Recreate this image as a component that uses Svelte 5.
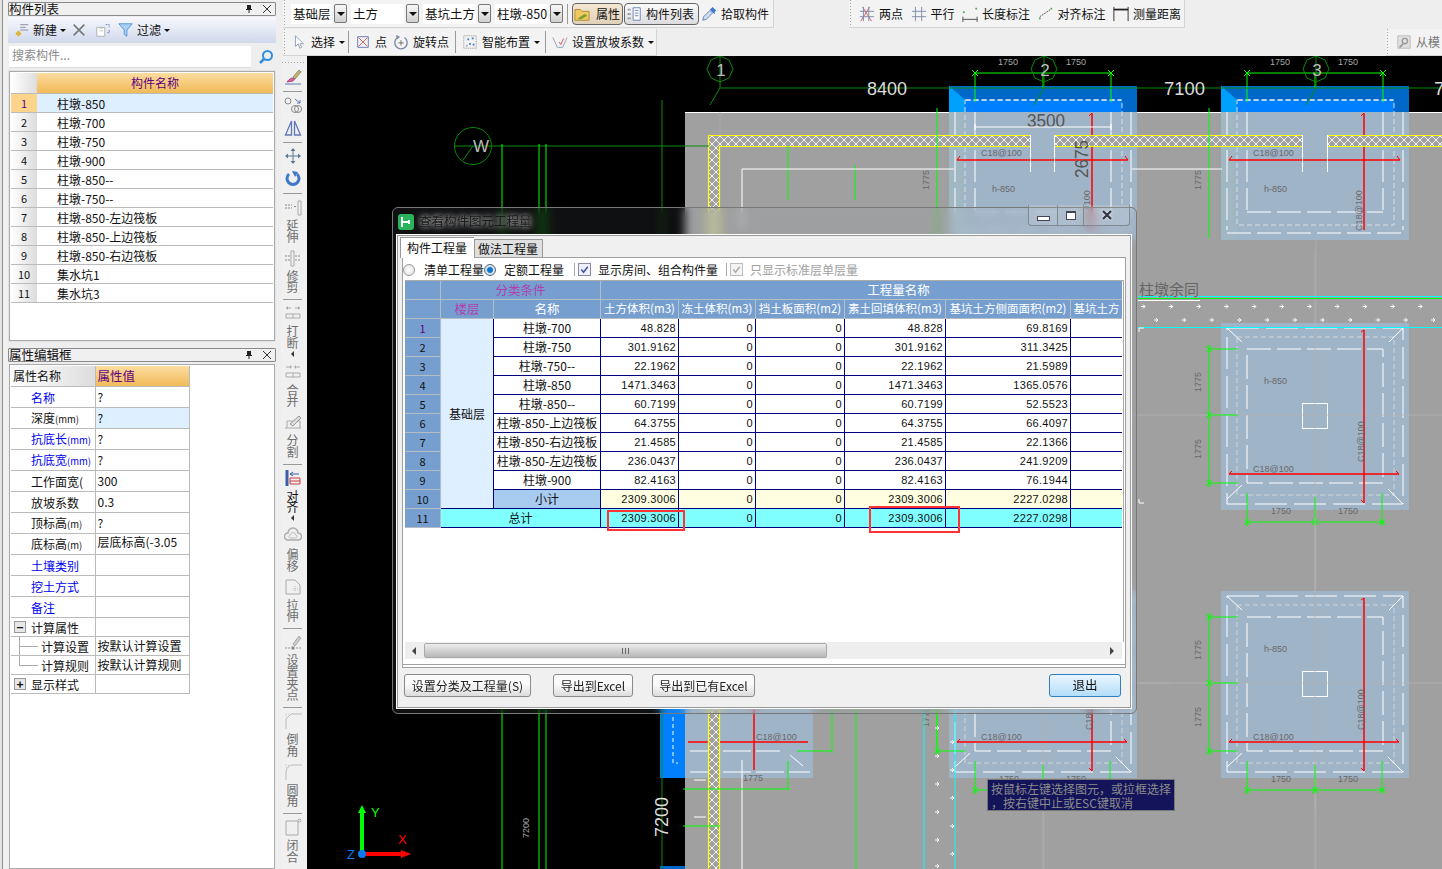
<script>
  const parts = ["柱墩-850","柱墩-700","柱墩-750","柱墩-900","柱墩-850--","柱墩-750--","柱墩-850-左边筏板","柱墩-850-上边筏板","柱墩-850-右边筏板","集水坑1","集水坑3"]

  const props = [
    { k: "名称", v: "?", blue: true },
    { k: "深度", u: "(mm)", v: "?", on: true },
    { k: "抗底长", u: "(mm)", v: "?", blue: true },
    { k: "抗底宽", u: "(mm)", v: "?", blue: true },
    { k: "工作面宽(", v: "300" },
    { k: "放坡系数", v: "0.3" },
    { k: "顶标高", u: "(m)", v: "?" },
    { k: "底标高", u: "(m)", v: "层底标高(-3.05", high: true },
    { k: "土壤类别", v: "", blue: true },
    { k: "挖土方式", v: "", blue: true },
    { k: "备注", v: "", blue: true },
  ]

  const rows = [
    ["柱墩-700","48.828","48.828","69.8169"],
    ["柱墩-750","301.9162","301.9162","311.3425"],
    ["柱墩-750--","22.1962","22.1962","21.5989"],
    ["柱墩-850","1471.3463","1471.3463","1365.0576"],
    ["柱墩-850--","60.7199","60.7199","52.5523"],
    ["柱墩-850-上边筏板","64.3755","64.3755","66.4097"],
    ["柱墩-850-右边筏板","21.4585","21.4585","22.1366"],
    ["柱墩-850-左边筏板","236.0437","236.0437","241.9209"],
    ["柱墩-900","82.4163","82.4163","76.1944"],
  ]
  const cols = [36,53,107,78,77,89,101,125,51]
  const heads = ["土方体积(m3)","冻土体积(m3)","挡土板面积(m2)","素土回填体积(m3)","基坑土方侧面面积(m2)","基坑土方"]

  const vtools = [
    { i: "brush", on: true },
    { sep: true },
    { i: "circles", on: true },
    { i: "mirror", on: true },
    { sep: true },
    { i: "move", on: true },
    { i: "rotate", on: true },
    { sep: true },
    { i: "extend", t: "延伸" },
    { i: "trim", t: "修剪" },
    { sep: true },
    { i: "break", t: "打断", more: true },
    { i: "merge", t: "合并" },
    { i: "split", t: "分割" },
    { sep: true },
    { i: "align", t: "对齐", more: true, on: true },
    { i: "offset", t: "偏移" },
    { i: "stretch", t: "拉伸" },
    { sep: true },
    { i: "grip", t: "设置夹点" },
    { sep: true },
    { i: "chamfer", t: "倒角" },
    { i: "fillet", t: "圆角" },
    { sep: true },
    { i: "close", t: "闭合" },
  ]

  const arrowsA = Array.from({ length: 11 }, (_, i) => 1141 + i * 27.7)
  const arrowsB = Array.from({ length: 11 }, (_, i) => 1154 + i * 27.7)
  const arrowsC = [728, 742, 756, 770, 784, 798, 812, 826, 840, 854, 866]
</script>

{#snippet vicon(name)}
  <svg class="vi" viewBox="0 0 18 18" fill="none" stroke="#8a8a8a">
    {#if name === "brush"}
      <path d="M15 2 9 9l2 2 6-7z" fill="#c9b36a" stroke="#8f8f6a"/><path d="M8 10c-3 1-4 3-5 4l6-1 1.5-2z" fill="#d9609a" stroke="#b04a80"/><path d="M1 16h16" stroke="#5f78b8"/>
    {:else if name === "circles"}
      <circle cx="4" cy="5" r="3"/><path d="m11 3 5 4m0-3v3h-3" stroke="#5f78b8"/><circle cx="11" cy="13" r="3.5"/><circle cx="14" cy="13" r="3.5"/>
    {:else if name === "mirror"}
      <path d="M7.5 2 1.5 16h6zM10.5 2l6 14h-6z" stroke="#5f78b8" stroke-width="1.3"/>
    {:else if name === "move"}
      <path d="M9 3v12M3 9h12" stroke="#5f7898"/><path d="M9 1 6.500 4h5zM9 17l-2.500-3h5zM1 9l3-2.500v5zM17 9l-3-2.500v5z" fill="#5f7898" stroke="none"/>
    {:else if name === "rotate"}
      <path d="M5 4a6 6 0 1 0 8 0" stroke="#3f78c8" stroke-width="3"/><path d="m8 1 6 1-3 5z" fill="#3f78c8" stroke="none"/>
    {:else if name === "extend"}
      <path d="M1 7h7M1 10h7M10 8.500h2" stroke-dasharray="2 1"/><path d="M14 3h3v14h-3z" stroke="#aaa"/>
    {:else if name === "trim"}
      <path d="M1 7h6M1 11h6M11 7h6M11 11h6" stroke-dasharray="2 1"/><path d="M7 2h3v15H7z" stroke="#aaa"/>
    {:else if name === "break"}
      <path d="M2 4h5M11 4h5" stroke="#aaa"/><path d="m2 4 2-2v4zM16 4l-2-2v4z" fill="#aaa" stroke="none"/><path d="M2 10h14v4H2zM9 10v4" stroke="#aaa"/>
    {:else if name === "merge"}
      <path d="M2 4h5M11 4h5" stroke="#aaa"/><path d="M8 4 6 2v4zM10 4l2-2v4z" fill="#aaa" stroke="none"/><path d="M2 10h14v4H2zM9 10v4" stroke="#aaa"/>
    {:else if name === "split"}
      <path d="M1 15h16M3 15V8h13v7" stroke="#aaa"/><path d="m6 11 9-8 2 2-8 8z" fill="#ddd" stroke="#999"/>
    {:else if name === "align"}
      <path d="M3 1v16" stroke="#3a5fa8" stroke-width="3"/><path d="M6 5h9M6 5l3-2M6 5l3 2" stroke="#3a5fa8"/><path d="M6 9h10v6H6z" stroke="#c84040"/><path d="M6 12h10" stroke="#c84040"/>
    {:else if name === "offset"}
      <path d="M4 13a3.500 3.500 0 0 1 0-7 5 5 0 0 1 10 0 3.500 3.500 0 0 1 0 7z" stroke-width="1.500" stroke="#aaa"/><path d="M6.500 11a1.500 1.500 0 0 1 0-3 2.500 2.500 0 0 1 5 0 1.500 1.500 0 0 1 0 3z" stroke="#bbb"/>
    {:else if name === "stretch"}
      <path d="M2 2h9l5 5v9H2z" stroke="#aaa"/><path d="M11 8v6M9 11h5" stroke="#bbb" stroke-dasharray="1 1"/>
    {:else if name === "grip"}
      <path d="m9 11 6-8 2 2-6 8z" fill="#ccc" stroke="#aaa"/><path d="M1 15h5M12 15h5" stroke="#999" stroke-dasharray="2 1"/><rect x="7.500" y="13.500" width="3" height="3" fill="#888" stroke="none"/>
    {:else if name === "chamfer"}
      <path d="M2 17V7l5-5h11" stroke="#bbb"/><path d="M2 2h4M2 2v4" stroke="#ccc" stroke-dasharray="1 1"/>
    {:else if name === "fillet"}
      <path d="M2 17V9a7 7 0 0 1 7-7h9" stroke="#bbb"/><path d="M2 2h4M2 2v4" stroke="#ccc" stroke-dasharray="1 1"/>
    {:else if name === "close"}
      <path d="M2 3h12v14H2z" stroke="#aaa"/><circle cx="15.500" cy="2.500" r="1.500" stroke="#aaa"/>
    {/if}
  </svg>
{/snippet}

{#snippet pad(dx, dy)}
  <g transform="translate({dx} {dy})">
    <rect x="1221" y="323" width="188" height="187" fill="#a0b4c8"/>
    <path d="M1227 328h176v176h-176z" fill="none" stroke="#fff" stroke-dasharray="32 7"/>
    <path d="M1237 337h157v158h-157z" fill="none" stroke="#d0d4d8" stroke-dasharray="5 3"/>
    <path d="M1247 349h136v134h-136z" fill="none" stroke="#fff" stroke-dasharray="24 6"/>
    <path d="M1227 328l15 14M1403 328l-14 14M1227 499l15-14M1403 504l-15-15" stroke="#fff"/>
    <rect x="1302.500" y="403.500" width="25" height="25" fill="none" stroke="#fff"/>
    <path d="M1315 250v560M1100 415h342" stroke="#b4b4b4" opacity=".7"/>
    <path d="M1229 474h170M1364 330v173" stroke="#f00" stroke-width="1.500"/>
    <path d="m1229 474 3-3M1399 474l-3-3M1364 330l-3 2M1364 503l-3-3" stroke="#f00"/>
    <text x="1253" y="472" class="cad">C18@100</text>
    <text x="1364" y="462" class="cad" transform="rotate(-90 1364 462)">C18@100</text>
    <text x="1264" y="384" class="cad">h-850</text>
    <path d="M1209 345v142M1209 349h29M1209 415h29M1209 483h29M1247 493v33M1315 497v29M1382 493v33M1246 522h139" stroke="#0f0"/>
    <path d="m1206 346 6 6m0-6-6 6M1206 412l6 6m0-6-6 6M1206 480l6 6m0-6-6 6M1244 519l6 6m0-6-6 6M1312 519l6 6m0-6-6 6M1379 519l6 6m0-6-6 6" stroke="#0f0"/>
    <text x="1201" y="392" class="cad" transform="rotate(-90 1201 392)">1775</text>
    <text x="1201" y="459" class="cad" transform="rotate(-90 1201 459)">1775</text>
    <text x="1271" y="514" class="cad">1750</text>
    <text x="1338" y="514" class="cad">1750</text>
  </g>
{/snippet}

{#snippet topPad(dx)}
  <g transform="translate({dx} 0)">
    <rect x="1221" y="86" width="188" height="26" fill="#0068c8"/>
    <path d="M1221 86 1237 100h157v12H1221z" fill="#0080ff"/>
    <path d="M1221 86 1237 100v12h-16z" fill="#00a0ff"/>
    <rect x="1221" y="112" width="188" height="128" fill="#a0b4c8"/>
    <rect x="1221" y="112" width="16" height="128" fill="#a0b8c4"/>
    <path d="M1237 100h157v125h-157z" fill="none" stroke="#d8dce0" stroke-dasharray="5 3"/>
    <path d="M1238 100h155" stroke="#fff" stroke-dasharray="5 3" stroke-width="1.200"/>
    <path d="M1227 112v118M1247 112v98M1383 112v98M1403 112v118" stroke="#fff" stroke-dasharray="32 6"/>
    <path d="M1247 212h136M1227 233h176" stroke="#fff" stroke-dasharray="24 6"/>
    <path d="M1229 160h171M1364 113v117" stroke="#f00" stroke-width="1.500"/>
    <path d="m1229 160 3-4M1400 160l-3-4M1364 113l-3 3" stroke="#f00"/>
    <path d="M1247 73h136M1247 73v29M1383 73v29M1315 73v15" stroke="#0f0"/>
    <path d="m1244 70 6 6m0-6-6 6M1380 70l6 6m0-6-6 6" stroke="#0f0"/>
    <text x="1270" y="65" class="cadw">1750</text>
    <text x="1338" y="65" class="cadw">1750</text>
    <text x="1253" y="156" class="cad">C18@100</text>
    <text x="1264" y="192" class="cad">h-850</text>
    <text x="1362" y="231" class="cad" transform="rotate(-90 1362 231)">C18@100</text>
  </g>
{/snippet}

<div class="app">
  <aside class="left">
    <div class="strip"></div>
    <div class="lcol">
      <div class="ptitle">
        <span>构件列表</span>
        <svg class="pin" viewBox="0 0 10 10"><path d="M3 1h4v4h1v1H5.500v3h-1V6H2V5h1z" fill="#222"/></svg>
        <svg class="x" viewBox="0 0 10 10"><path d="m1 1 8 8m0-8-8 8" stroke="#333"/></svg>
      </div>
      <div class="ltools">
        <svg class="ti" viewBox="0 0 18 18" fill="none"><path d="M7 3h9M7 6h6M7 9h9" stroke="#8a8a9a"/><path d="M5 10v6M2 13h6" stroke="#e0b030" stroke-width="2.500"/></svg>
        <span>新建</span><i class="drop"></i>
        <svg class="ti gap1" viewBox="0 0 18 18"><path d="m3 3 12 12m0-12L3 15" stroke="#777" stroke-width="1.800"/></svg>
        <svg class="ti gap2" viewBox="0 0 18 18" fill="none"><path d="M2 6h9v10H2z" fill="#fff" stroke="#aaa"/><path d="M5 7h4M5 10h4" stroke="#bbb"/><path d="M12 3h4v3m0 3v3h-3" stroke="#5f78b8" stroke-dasharray="2 1"/></svg>
        <svg class="ti gap3" viewBox="0 0 18 18"><path d="M1 2h15l-6 7v7l-3-2V9z" fill="#a8d0f4" stroke="#4a90d8"/></svg>
        <span>过滤</span><i class="drop"></i>
      </div>
      <div class="search">
        <div class="sinput">搜索构件...</div>
        <svg class="sbtn" viewBox="0 0 16 16" fill="none"><circle cx="9.500" cy="6.500" r="4.500" stroke="#2d8ee0" stroke-width="2"/><path d="M6 10 2 14" stroke="#2d8ee0" stroke-width="2.500"/></svg>
      </div>
      <div class="listbox">
        <table class="ltable">
          <colgroup><col class="c-idx"/><col/></colgroup>
          <thead><tr><th class="corner"></th><th class="orange">构件名称</th></tr></thead>
          <tbody>
            {#each parts as p, i}
              <tr class:sel={i === 0}>
                <td class="idx">{i + 1}</td>
                <td class="nm">{p}</td>
              </tr>
            {/each}
          </tbody>
        </table>
      </div>
      <div class="ptitle second">
        <span>属性编辑框</span>
        <svg class="pin" viewBox="0 0 10 10"><path d="M3 1h4v4h1v1H5.500v3h-1V6H2V5h1z" fill="#222"/></svg>
        <svg class="x" viewBox="0 0 10 10"><path d="m1 1 8 8m0-8-8 8" stroke="#333"/></svg>
      </div>
      <div class="propbox">
        <table class="ptable">
          <colgroup><col class="c-k"/><col class="c-v"/></colgroup>
          <thead><tr><th class="pk">属性名称</th><th class="orange pv">属性值</th></tr></thead>
          <tbody>
            {#each props as r}
              <tr>
                <td class="key" class:blue={r.blue}>{r.k}{#if r.u}<small>{r.u}</small>{/if}</td>
                <td class="val" class:on={r.on} class:high={r.high}>{r.v}</td>
              </tr>
            {/each}
            <tr class="low"><td class="key tree"><span class="box">−</span>计算属性</td><td class="val"></td></tr>
            <tr class="low"><td class="key sub"><i class="branch"></i>计算设置</td><td class="val">按默认计算设置</td></tr>
            <tr class="low"><td class="key sub"><i class="branch last"></i>计算规则</td><td class="val">按默认计算规则</td></tr>
            <tr class="low"><td class="key tree"><span class="box">+</span>显示样式</td><td class="val"></td></tr>
          </tbody>
        </table>
      </div>
    </div>
  </aside>

  <div class="main">
    <div class="top">
      <div class="toprow">
        <div class="bar tb1">
          <div class="combo w1"><span class="cv">基础层</span><b class="cb"></b></div>
          <div class="combo w2"><span class="cv">土方</span><b class="cb"></b></div>
          <div class="combo w3"><span class="cv">基坑土方</span><b class="cb"></b></div>
          <div class="combo w4"><span class="cv">柱墩-850</span><b class="cb"></b></div>
          <i class="vsep"></i>
          <div class="tog b1">
            <svg class="ti" viewBox="0 0 18 18"><path d="M1 4h6l2 2h8v10H1z" fill="#f0c860" stroke="#a88830"/><path d="m4 14 8-5 3 2-7 4z" fill="#78a030"/></svg>
            <span>属性</span>
          </div>
          <div class="tog b2">
            <svg class="ti" viewBox="0 0 18 18" fill="none"><path d="M8 2h8v14H8z" fill="#fff" stroke="#5f78b8"/><path d="M10 5h4M10 8h4M10 11h4" stroke="#5f78b8"/><path d="M2 4h3M2 9h3M2 14h3" stroke="#666" stroke-width="2" stroke-dasharray="1 1"/></svg>
            <span>构件列表</span>
          </div>
          <div class="plain pick">
            <svg class="ti" viewBox="0 0 18 18"><path d="m2 16 1-4 7-7 3 3-7 7z" fill="#cde" stroke="#5f78b8"/><path d="m11 3 2-2 4 4-2 2 1 1-1 1-5-5 1-1z" fill="#3f78c8"/></svg>
            <span>拾取构件</span>
          </div>
        </div>
        <div class="bar tb2">
          <div class="plain">
            <svg class="ti" viewBox="0 0 18 18" fill="none"><path d="M4 1 14 17M12 1 2 17" stroke="#d05050"/><path d="M5 1v16M11 1v16M1 6h16M1 12h16" stroke="#7a88a8"/></svg>
            <span>两点</span>
          </div>
          <div class="plain">
            <svg class="ti" viewBox="0 0 18 18" fill="none"><path d="M5 1v16M12 1v16M1 6h16M1 12h16" stroke="#7a88a8"/></svg>
            <span>平行</span>
          </div>
          <div class="plain">
            <svg class="ti" viewBox="0 0 18 18" fill="none"><path d="M1 15h16M1 12v6M17 12v6" stroke="#444"/><rect x="1" y="6" width="2" height="2" fill="#5a5"/><rect x="15" y="2" width="2" height="2" fill="#5a5"/></svg>
            <span>长度标注</span>
          </div>
          <div class="plain">
            <svg class="ti" viewBox="0 0 18 18" fill="none"><path d="m2 12 12-8" stroke="#444" stroke-dasharray="2 1"/><rect x="1" y="13" width="2" height="2" fill="#5a5"/><rect x="14" y="2" width="2" height="2" fill="#5a5"/></svg>
            <span>对齐标注</span>
          </div>
          <div class="plain">
            <svg class="ti" viewBox="0 0 18 18" fill="none"><path d="M1 1v16M17 1v16" stroke="#222"/><path d="M1 4h16" stroke="#222" stroke-width="2"/></svg>
            <span>测量距离</span>
          </div>
        </div>
      </div>
      <div class="toprow second">
        <div class="bar tb3">
          <div class="plain">
            <svg class="ti" viewBox="0 0 18 18"><path d="M5 2v12l3-3 2 5 2-1-2-4h4z" fill="#fff" stroke="#8a98b8"/></svg>
            <span>选择</span><i class="drop flush"></i>
          </div>
          <i class="vsep s1"></i>
          <div class="plain">
            <svg class="ti" viewBox="0 0 18 18" fill="none"><path d="M3 3h12v12H3z" stroke="#5f78b8"/><path d="m4 4 10 10m0-10L4 14" stroke="#d05050"/></svg>
            <span>点</span>
          </div>
          <div class="plain">
            <svg class="ti" viewBox="0 0 18 18" fill="none"><path d="M5 4a7 7 0 1 0 8 0" stroke="#7a88a8" stroke-width="1.500"/><path d="M9 7v6M6 10h6" stroke="#666"/><path d="m3 1 5 2-3 3z" fill="#7a88a8"/></svg>
            <span>旋转点</span>
          </div>
          <i class="vsep s2"></i>
          <div class="plain">
            <svg class="ti" viewBox="0 0 18 18" fill="none"><path d="M2 2h14v14H2z" stroke="#888" stroke-dasharray="1 1"/><path d="M6 6h2M11 5h2M8 11h2M12 12h2M5 13h1" stroke="#3f78c8" stroke-width="2"/></svg>
            <span>智能布置</span><i class="drop flush"></i>
          </div>
          <i class="vsep s3"></i>
          <div class="plain">
            <svg class="ti" viewBox="0 0 18 18" fill="none"><path d="m1 4 5 11h6l5-11" stroke="#8a98b8"/><path d="m8 9 2 3 3-7" stroke="#d05050"/></svg>
            <span>设置放坡系数</span><i class="drop flush"></i>
          </div>
        </div>
        <div class="bar tb4">
          <div class="plain">
            <svg class="ti" viewBox="0 0 18 18" fill="none"><path d="M2 2h14v14H2z" fill="#e0e0e0" stroke="#bbb"/><circle cx="10" cy="8" r="3" stroke="#999" stroke-width="1.500"/><path d="m8 11-4 4" stroke="#999" stroke-width="2"/></svg>
            <span class="grey">从模</span>
          </div>
        </div>
      </div>
    </div>

    <div class="body">
      <div class="vbar">
        <i class="vgrip"></i>
        {#each vtools as v}
          {#if v.sep}
            <i class="vline"></i>
          {:else}
            <div class="vbtn" class:solo={!v.t}>
              {@render vicon(v.i)}
              {#if v.t}
                <div class="vt" class:dark={v.on}>
                  {#each v.t as ch}<span>{ch}</span>{/each}
                </div>
              {/if}
              {#if v.more}<i class="left-arrow"></i>{/if}
            </div>
          {/if}
        {/each}
      </div>

      <div class="canvas">
        <svg class="draw" viewBox="307 56 1135 813" font-family="Liberation Sans, sans-serif">
          <defs>
            <pattern id="hatch" width="8" height="8" patternUnits="userSpaceOnUse">
              <path d="M0 0l8 8M8 0 0 8" stroke="#fff" stroke-width=".9"/>
            </pattern>
          </defs>
          <rect x="307" y="56" width="1135" height="813" fill="#000"/>
          <rect x="685" y="112" width="757" height="757" fill="#a0a0a0"/>
          <path d="M685 112.500h757" stroke="#fff"/>

          <path d="M1044 112v760M1316 112v760M720 112v34" stroke="#b4b4b4" opacity=".55"/>

          <!-- pile caps -->
          {@render topPad(-272)}
          {@render topPad(0)}
          {@render pad(0, 0)}
          {@render pad(0, 268)}
          {@render pad(-272, 268)}
          <rect x="660" y="700" width="25" height="78" fill="#0080ff"/>
          <rect x="660" y="866" width="25" height="3" fill="#0068c8"/>
          <rect x="685" y="591" width="128" height="187" fill="#a0b4c8"/>
          <path d="M673 717v46h5" fill="none" stroke="#fff" stroke-dasharray="4 3"/>
          <path d="M690 751h90M690 772h120" stroke="#fff" stroke-dasharray="28 5"/>
          <path d="M790 755l13 11M694 780h12M694 817h12" stroke="#fff"/>
          <path d="M688 742h120M754 700v70" stroke="#f00" stroke-width="1.500"/>
          <text x="756" y="740" class="cad">C18@100</text>
          <text x="743" y="781" class="cad">1775</text>

          <!-- wall band -->
          <rect x="709" y="135" width="733" height="11" fill="#a0a0a0"/>
          <rect x="709" y="135" width="733" height="11" fill="url(#hatch)"/>
          <rect x="709" y="135" width="10" height="734" fill="#a0a0a0"/>
          <rect x="709" y="135" width="10" height="734" fill="url(#hatch)"/>
          <path d="M708.500 869V135.500H1442M719.500 869V146.500H1442" fill="none" stroke="#ff0" stroke-width="1.200"/>
          <path d="M1030.500 135v37M1054.500 135v37M1302.500 135v37M1327.500 135v37" stroke="#fff"/>
          <rect x="1031" y="135" width="23" height="12" fill="#a0b4c8"/>
          <rect x="1303" y="135" width="24" height="12" fill="#a0b4c8"/>

          <!-- axes -->
          <path d="M455 146h254" stroke="#0a8a0a"/>
          <path d="M720 88h722" stroke="#0a8a0a" stroke-width="1.200"/>
          <path d="M720 88l-10 17M1044 88l-10 17M1316 88l-10 17M473 146l-10 14" stroke="#0a8a0a"/>
          <path d="M720 56v32M1044 56v32M1316 56v32" stroke="#0a8a0a"/>
          <polygon points="720,56 729,60 733,69 729,78 720,82 711,78 707,69 711,60" fill="none" stroke="#0a8a0a"/>
          <polygon points="1044,56 1053,60 1057,69 1053,78 1044,82 1035,78 1031,69 1035,60" fill="none" stroke="#0a8a0a"/>
          <polygon points="1316,56 1325,60 1329,69 1325,78 1316,82 1307,78 1303,69 1307,60" fill="none" stroke="#0a8a0a"/>
          <circle cx="473" cy="146" r="18.500" fill="none" stroke="#0a8a0a"/>
          <text x="721" y="76" class="axis" text-anchor="middle">1</text>
          <text x="1045" y="76" class="axis" text-anchor="middle">2</text>
          <text x="1317" y="76" class="axis" text-anchor="middle">3</text>
          <text x="481" y="152" class="axis" text-anchor="middle">W</text>
          <text x="867" y="95" class="big" textLength="40" lengthAdjust="spacingAndGlyphs">8400</text>
          <text x="1164" y="95" class="big" textLength="41" lengthAdjust="spacingAndGlyphs">7100</text>
          <text x="1434" y="95" class="big">7</text>
          <text x="1027" y="127" class="dim" textLength="38" lengthAdjust="spacingAndGlyphs">3500</text>
          <path d="M975 127h136M975 124v6M1111 124v6" stroke="#fff" stroke-width="1.200"/>
          <text x="1088" y="178" class="dim" transform="rotate(-90 1088 178)" textLength="38" lengthAdjust="spacingAndGlyphs">2675</text>

          <!-- lines -->
          <path d="M502 144v725M539 144v725M546 144v725M788 146v54M855 165v35M937 108v640M1209 108v130" stroke="#0f0"/>
          <path d="M662 100v769" stroke="#0a8a0a"/>
          <path d="M856 700v169" stroke="#0f0"/>
          <path d="M924 700v169M955 700v169" stroke="#0ff"/>
          <path d="M742 169h212M742 169v60M1132 169h90M742 760v109" stroke="#fff"/>
          <path d="M683 789h107M683 826h37M797 751h35M832 700v53M788 761v29" stroke="#0f0"/>
          <text x="529" y="838" class="cadw" transform="rotate(-90 529 838)">7200</text>
          <text x="668" y="837" class="big" transform="rotate(-90 668 837)" textLength="40" lengthAdjust="spacingAndGlyphs">7200</text>
          <text x="929" y="190" class="cad" transform="rotate(-90 929 190)">1775</text>
          <text x="1201" y="190" class="cad" transform="rotate(-90 1201 190)">1775</text>

          <!-- top-right dims -->
          <path d="M1138 296.500h304" stroke="#0ff"/>
          <path d="M1138 298.500h304" stroke="#0f0"/>
          <path d="M1138 300.500h62" stroke="#fff"/>
          <path d="M1138 327.500h304" stroke="#0ff"/>
          <path d="M1139 332v-4h5M1139 499v4h5" fill="none" stroke="#fff"/>
          <text x="1139" y="295" class="note">柱墩余同</text>
          {#each arrowsA as x}<path d="M{x} 306.500h4m-2-2 2 2-2 2" fill="none" stroke="#fff"/>{/each}
          {#each arrowsB as x}<path d="M{x} 320h4m-2-2 2 2-2 2" fill="none" stroke="#fff"/>{/each}
          {#each arrowsC as y, i}<path d="M{i % 2 ? 950 : 935} {y}h4m-2-2 2 2-2 2" fill="none" stroke="#fff"/>{/each}

          <!-- ucs -->
          <path d="M362 853v-42" stroke="#0f0" stroke-width="4"/>
          <path d="m362 805-4 8h8z" fill="#0f0"/>
          <path d="M362 854h40" stroke="#f00" stroke-width="4"/>
          <path d="m411 854-10-4v8z" fill="#f00"/>
          <circle cx="362" cy="854" r="4" fill="#0a78f0"/>
          <text x="371" y="817" class="ucs" fill="#0f0">Y</text>
          <text x="398" y="844" class="ucs" fill="#f00">X</text>
          <text x="347" y="859" class="ucs" fill="#0a78f0">Z</text>
        </svg>

        <div class="tip">按鼠标左键选择图元，或拉框选择<br/>，按右键中止或ESC键取消</div>

        <div class="dlg">
          <div class="dtitle">
            <svg class="dicon" viewBox="0 0 16 16"><rect width="16" height="16" rx="3" fill="#2bb35c"/><path d="M4 3v10M4 8h7M11 6v4" stroke="#fff" stroke-width="1.800" fill="none"/></svg>
            <span>查看构件图元工程量</span>
            <div class="winbtns">
              <span class="wb"><i class="wmin"></i></span>
              <span class="wb w2b"><i class="wmax"></i></span>
              <span class="wb wide">
                <svg viewBox="0 0 12 10" class="wx"><path d="m2 1 8 8m0-8-8 8" stroke="#334" stroke-width="2.200"/></svg>
              </span>
            </div>
          </div>
          <div class="dbody">
            <div class="tabs">
              <span class="tab active">构件工程量</span>
              <span class="tab">做法工程量</span>
            </div>
            <div class="tabpanel">
              <div class="opts">
                <i class="radio first"></i><span class="o1">清单工程量</span>
                <i class="radio on"></i><span class="o2">定额工程量</span>
                <i class="osep"></i>
                <i class="chk"><svg viewBox="0 0 12 12"><path d="m2.500 6 2.500 3 4.500-6" stroke="#3a50a0" stroke-width="1.600" fill="none"/></svg></i>
                <span class="o3">显示房间、组合构件量</span>
                <i class="osep"></i>
                <i class="chk dis"><svg viewBox="0 0 12 12"><path d="m2.500 6 2.500 3 4.500-6" stroke="#aaa" stroke-width="1.600" fill="none"/></svg></i>
                <span class="o4">只显示标准层单层量</span>
              </div>
              <div class="gridwrap">
                <table class="qty">
                  <colgroup>
                    {#each cols as c}<col style="width:{c}px"/>{/each}
                  </colgroup>
                  <thead>
                    <tr>
                      <th></th>
                      <th colspan="2" class="mag">分类条件</th>
                      <th colspan="6" class="qname">工程量名称</th>
                    </tr>
                    <tr>
                      <th></th>
                      <th class="mag">楼层</th>
                      <th>名称</th>
                      {#each heads as h}<th class="hsm">{h}</th>{/each}
                    </tr>
                  </thead>
                  <tbody>
                    {#each rows as r, i}
                      <tr>
                        <td class="n" class:first={i === 0}>{i + 1}</td>
                        {#if i === 0}<td class="floor" rowspan="10">基础层</td>{/if}
                        <td class="name">{r[0]}</td>
                        <td class="num">{r[1]}</td>
                        <td class="num">0</td>
                        <td class="num">0</td>
                        <td class="num">{r[2]}</td>
                        <td class="num">{r[3]}</td>
                        <td></td>
                      </tr>
                    {/each}
                    <tr class="sub-row">
                      <td class="n">10</td>
                      <td class="name subt">小计</td>
                      <td class="num">2309.3006</td>
                      <td class="num">0</td>
                      <td class="num">0</td>
                      <td class="num">2309.3006</td>
                      <td class="num">2227.0298</td>
                      <td></td>
                    </tr>
                    <tr class="tot-row">
                      <td class="n">11</td>
                      <td colspan="2" class="name">总计</td>
                      <td class="num">2309.3006</td>
                      <td class="num">0</td>
                      <td class="num">0</td>
                      <td class="num">2309.3006</td>
                      <td class="num">2227.0298</td>
                      <td></td>
                    </tr>
                  </tbody>
                </table>
              </div>
              <div class="hscroll">
                <i class="arr l"></i>
                <div class="thumb"><span class="grip"></span></div>
                <i class="arr r"></i>
              </div>
            </div>
            <div class="actions">
              <button class="btn">设置分类及工程量(S)</button>
              <button class="btn">导出到Excel</button>
              <button class="btn">导出到已有Excel</button>
              <button class="btn primary">退出</button>
            </div>
          </div>
          <div class="mark m1"></div>
          <div class="mark m2"></div>
        </div>
      </div>
    </div>
  </div>
</div>

<style>
  :global(body) {
    margin: 0;
  }
  .app {
    width: 1442px;
    height: 869px;
    overflow: hidden;
    display: flex;
    background: #eeeeee;
    font-family: "Noto Sans CJK SC", "Liberation Sans", sans-serif;
    font-size: 12px;
    color: #111;
    line-height: 1;
  }

  /* left dock */
  .left {
    width: 281px;
    flex: none;
    display: flex;
  }
  .strip {
    width: 8px;
    flex: none;
    background: linear-gradient(90deg, #e4e4e4 2px, #8f8f8f 2px, #8f8f8f 3px, #f0f0f0 3px);
  }
  .lcol {
    width: 268px;
    flex: none;
    padding-top: 2px;
    display: flex;
    flex-direction: column;
  }
  .ptitle {
    height: 14px;
    box-sizing: border-box;
    border: 1px solid #8a8a8a;
    border-radius: 1px;
    background: #f0f0f0;
    display: flex;
    align-items: center;
    font-size: 12.500px;
  }
  .ptitle span {
    flex: 1;
  }
  .ptitle.second {
    margin-top: 7px;
  }
  .pin {
    width: 10px;
    height: 10px;
    margin-right: 8px;
  }
  .x {
    width: 10px;
    height: 10px;
    margin-right: 3px;
  }
  .ltools {
    margin-top: 1px;
    height: 26px;
    display: flex;
    align-items: center;
    padding-left: 6px;
    background: linear-gradient(#f7f8fd, #d0d8ec);
  }
  .ti {
    width: 16px;
    height: 16px;
    flex: none;
    display: block;
  }
  .ltools span {
    margin-left: 3px;
  }
  .gap1 {
    margin-left: 5px;
  }
  .gap2 {
    margin-left: 8px;
  }
  .gap3 {
    margin-left: 7px;
  }
  .drop {
    width: 0;
    height: 0;
    margin-left: 3px;
    border: 3px solid transparent;
    border-top-color: #111;
    border-bottom: 0;
    display: block;
    flex: none;
  }
  .drop.flush {
    margin-left: 0;
  }
  .search {
    margin-top: 3px;
    height: 22px;
    display: flex;
    align-items: center;
  }
  .sinput {
    width: 242px;
    height: 22px;
    margin-left: 1px;
    box-sizing: border-box;
    background: #fff;
    color: #8a8a8a;
    padding: 3px 3px;
    border-bottom: 1px solid #ddd;
    font-size: 12px;
  }
  .sbtn {
    width: 16px;
    height: 16px;
    margin-left: 7px;
  }
  .listbox {
    margin: 3px 0 0 1px;
    width: 266px;
    height: 270px;
    box-sizing: border-box;
    border: 1px solid #aaa;
    background: #fff;
    padding: 1px;
    outline: 1px solid #e4e4e4;
  }
  .ltable,
  .ptable {
    border-collapse: collapse;
    table-layout: fixed;
    width: 262px;
  }
  .c-idx {
    width: 26px;
  }
  .corner {
    background: linear-gradient(90deg, #fff, #ddd);
    border-bottom: 1px solid #bbb;
    height: 20px;
    padding: 0;
  }
  .orange {
    background: linear-gradient(#fcdca0, #f0ba58);
    color: #5f0080;
    font-weight: 400;
    padding: 0;
    border-bottom: 1px solid #bbb;
  }
  .ltable td {
    height: 18px;
    padding: 0;
    border-bottom: 1px solid #bbb;
  }
  .idx {
    text-align: center;
    background: linear-gradient(90deg, #fff, #dcdcdc);
    font-size: 11px;
  }
  .ltable .nm {
    height: 17px;
    padding: 1px 0 0 20px;
  }
  .sel .nm {
    background: #def0ff;
  }
  .sel .idx {
    background: #fdd48c;
    color: #5f0080;
  }
  .propbox {
    margin: 2px 0 0 1px;
    width: 266px;
    flex: 1;
    box-sizing: border-box;
    border: 1px solid #aaa;
    background: #fff;
    padding: 1px;
  }
  .ptable {
    width: 178px;
  }
  .c-k {
    width: 84px;
  }
  .c-v {
    width: 94px;
  }
  .pk {
    background: linear-gradient(90deg, #fff, #ddd);
    font-weight: 400;
    height: 20px;
    padding: 0 0 0 2px;
    text-align: left;
    border-bottom: 1px solid #bbb;
    border-right: 1px solid #bbb;
  }
  .pv {
    text-align: left;
    padding-left: 2px;
    border-right: 1px solid #bbb;
    font-size: 12.500px;
  }
  .ptable td {
    height: 20px;
    padding: 0;
    border-bottom: 1px solid #bbb;
    border-right: 1px solid #bbb;
    white-space: nowrap;
    overflow: hidden;
  }
  .ptable .low td {
    height: 18px;
  }
  .ptable .key {
    height: 19px;
    padding: 1px 0 0 20px;
  }
  .ptable .low .key {
    height: 17px;
  }
  .key small {
    font-size: 9.500px;
  }
  .blue {
    color: #0000f0;
  }
  .ptable .val {
    padding-left: 2px;
  }
  .ptable .val.high {
    height: 16px;
    padding-bottom: 4px;
  }
  .val.on {
    background: #def0ff;
  }
  .tree {
    position: relative;
  }
  .box {
    position: absolute;
    left: 3px;
    top: 3px;
    width: 10px;
    height: 10px;
    line-height: 9px;
    text-align: center;
    border: 1px solid #999;
    background: #e8e8e8;
    font-weight: 700;
  }
  .ptable .key.sub {
    padding-left: 30px;
    position: relative;
  }
  .branch {
    position: absolute;
    left: 8px;
    top: 0;
    height: 9px;
    width: 18px;
    border-left: 1px solid #aaa;
    border-bottom: 1px solid #aaa;
  }
  .branch:not(.last)::after {
    content: "";
    position: absolute;
    left: -1px;
    top: 9px;
    height: 10px;
    border-left: 1px solid #aaa;
  }

  /* top */
  .main {
    flex: 1;
    min-width: 0;
    display: flex;
    flex-direction: column;
  }
  .top {
    height: 56px;
    flex: none;
  }
  .toprow {
    height: 28px;
    display: flex;
  }
  .bar {
    background-color: #f3f3f3;
    background-image: repeating-linear-gradient(#a8a8a8 0 1px, transparent 1px 3px);
    background-size: 1px 100%;
    background-position: 1px 0;
    background-repeat: no-repeat;
    border-bottom: 1px solid #d4d4d4;
    border-right: 1px solid #d4d4d4;
    display: flex;
    align-items: center;
    box-sizing: border-box;
  }
  .tb1 {
    margin-left: 2px;
    width: 491px;
    padding-left: 8px;
  }
  .combo {
    display: flex;
    align-items: center;
    height: 20px;
    margin-right: 4px;
    flex: none;
  }
  .cv {
    background: #fff;
    height: 20px;
    line-height: 20px;
    padding-left: 2px;
    flex: 1;
    min-width: 0;
    font-size: 12.500px;
    box-sizing: border-box;
    white-space: nowrap;
    overflow: hidden;
  }
  .cb {
    width: 13px;
    height: 19px;
    margin-left: 2px;
    border: 1px solid #777;
    border-radius: 2px;
    background: linear-gradient(#f8f8f8, #cfcfcf);
    position: relative;
    flex: none;
    box-sizing: border-box;
  }
  .cb::after {
    content: "";
    position: absolute;
    left: 1.500px;
    top: 7px;
    border: 4px solid transparent;
    border-top-color: #111;
    border-bottom: 0;
  }
  .w1 {
    width: 56px;
  }
  .w2,
  .w3,
  .w4 {
    width: 68px;
  }
  .vsep {
    width: 1px;
    height: 20px;
    background: #999;
    flex: none;
    margin: 0 4px 0 0;
  }
  .tog {
    height: 20px;
    border: 1px solid #666;
    border-radius: 4px;
    background: linear-gradient(#fafafa, #dcdce0);
    display: flex;
    align-items: center;
    box-sizing: content-box;
    margin-right: 1px;
  }
  .b1 {
    width: 48px;
    padding-left: 1px;
    gap: 6px;
    background: linear-gradient(#f4e8d0, #e0d0b8);
  }
  .b2 {
    width: 72px;
    padding-left: 1px;
    gap: 4px;
  }
  .plain {
    display: flex;
    align-items: center;
    gap: 4px;
    white-space: nowrap;
  }
  .pick {
    margin-left: 1px;
  }
  .tb2 {
    margin-left: 75px;
    width: 336px;
    padding-left: 10px;
    gap: 7.500px;
  }
  .tb3 {
    margin: 1px 0 0 2px;
    width: 374px;
    padding-left: 8px;
    gap: 6px;
    height: 27px;
  }
  .tb3 .vsep {
    margin: 0;
    height: 22px;
  }
  .tb3 .s1 {
    margin-left: -3px;
  }
  .tb3 .s3 {
    margin-left: -1px;
  }
  .tb4 {
    margin: 1px 0 0 auto;
    width: 56px;
    padding-left: 10px;
    height: 27px;
    border-right: 0;
    white-space: nowrap;
    overflow: hidden;
  }
  .grey {
    color: #777;
  }

  /* body */
  .body {
    flex: 1;
    min-height: 0;
    display: flex;
  }
  .vbar {
    width: 26px;
    flex: none;
    box-sizing: border-box;
    background: #f0f0f0;
    display: flex;
    flex-direction: column;
    align-items: center;
    padding: 6px 3px 0 0;
    overflow: hidden;
  }
  .vgrip {
    width: 22px;
    height: 1px;
    flex: none;
    margin-bottom: 5px;
    background: repeating-linear-gradient(90deg, #a8a8a8 0 1px, transparent 1px 3px);
  }
  .vbtn {
    display: flex;
    flex-direction: column;
    align-items: center;
    margin-bottom: 6px;
    flex: none;
  }
  .vbtn.solo {
    margin-bottom: 5px;
  }
  .vi {
    width: 18px;
    height: 18px;
    display: block;
    flex: none;
  }
  .vt {
    color: #6e6e6e;
    margin-top: 3px;
    display: flex;
    flex-direction: column;
    align-items: center;
  }
  .vt span {
    display: block;
    line-height: 11.750px;
    height: 11.750px;
  }
  .vt.dark {
    color: #111;
  }
  .vline {
    width: 19px;
    height: 1px;
    background: #999;
    flex: none;
    margin: 0 0 4px;
  }
  .left-arrow {
    width: 0;
    height: 0;
    border: 3px solid transparent;
    border-right-color: #333;
    border-left: 0;
    margin-top: 2px;
  }
  .canvas {
    flex: 1;
    min-width: 0;
    position: relative;
    overflow: hidden;
    background: #000;
  }
  .draw {
    display: block;
    width: 1135px;
    height: 813px;
  }
  .cad {
    font-size: 9px;
    fill: #686868;
  }
  .cadw {
    font-size: 9px;
    fill: #a8a8a8;
  }
  .axis {
    font-size: 17px;
    fill: #bcbcbc;
  }
  .big {
    font-size: 19px;
    fill: #dcdcdc;
  }
  .dim {
    font-size: 19px;
    fill: #555;
  }
  .note {
    font-size: 15px;
    fill: #666;
    font-family: "Noto Sans CJK SC", sans-serif;
  }
  .ucs {
    font-size: 13px;
    font-weight: 400;
  }
  .tip {
    position: absolute;
    left: 680px;
    top: 723px;
    width: 188px;
    height: 32px;
    box-sizing: border-box;
    background: #14145a;
    border: 1px solid #777;
    color: #8c8c8c;
    font-size: 12px;
    line-height: 14px;
    padding: 2px 0 0 3px;
    white-space: nowrap;
    overflow: hidden;
  }

  /* dialog */
  .dlg {
    position: absolute;
    left: 85px;
    top: 151px;
    width: 745px;
    height: 507px;
    box-sizing: border-box;
    border: 1px solid #777;
    border-radius: 6px;
    background: rgba(150, 160, 170, 0.1);
    backdrop-filter: blur(5px);
    padding: 0 5px 5px 4px;
    display: flex;
    flex-direction: column;
  }
  .dtitle {
    height: 27px;
    flex: none;
    display: flex;
    align-items: center;
    position: relative;
    color: #1a1a1a;
    font-size: 12.500px;
    padding-left: 1px;
    text-shadow: 0 0 5px rgba(255, 255, 255, 0.75), 0 0 9px rgba(255, 255, 255, 0.5);
  }
  .dicon {
    width: 16px;
    height: 16px;
    margin-right: 5px;
    flex: none;
  }
  .winbtns {
    position: absolute;
    right: 1px;
    top: -3px;
    height: 21px;
    width: 102px;
    box-sizing: border-box;
    border: 1px solid #7f8a92;
    border-top: 0;
    border-radius: 0 0 4px 4px;
    display: flex;
    background: rgba(255, 255, 255, 0.14);
  }
  .wb {
    width: 29px;
    display: flex;
    align-items: center;
    justify-content: center;
    border-right: 1px solid #7f8a92;
    box-sizing: border-box;
  }
  .wb.w2b {
    width: 26px;
  }
  .wb.wide {
    flex: 1;
    width: auto;
    border: 0;
  }
  .wmin {
    width: 11px;
    height: 3px;
    border: 1px solid #445;
    background: #fff;
    margin-top: 6px;
  }
  .wmax {
    width: 8px;
    height: 6px;
    border: 1px solid #445;
    border-top-width: 2px;
    background: #fff;
  }
  .wx {
    width: 12px;
    height: 10px;
    filter: drop-shadow(0 0 1px #fff);
  }
  .dbody {
    flex: 1;
    min-height: 0;
    background: #f0f0f0;
    border: 1px solid #999;
    outline: 1px solid #fff;
    box-sizing: border-box;
    display: flex;
    flex-direction: column;
  }
  .tabs {
    height: 21px;
    flex: none;
    display: flex;
    align-items: flex-end;
    padding-left: 2px;
  }
  .tab {
    height: 17px;
    line-height: 17px;
    padding: 0 4px 0 3px;
    border: 1px solid #999;
    border-bottom: 0;
    background: #e0e0e0;
    position: relative;
  }
  .tab.active {
    height: 20px;
    line-height: 20px;
    padding: 0 7px 0 6px;
    background: #fff;
    border-right: 0;
    top: 1px;
    z-index: 1;
  }
  .tabpanel {
    height: 408px;
    flex: none;
    margin: 0 4px;
    box-sizing: border-box;
    border: 1px solid #a0a0a0;
    background: #fff;
    padding: 0 3px 2px 2px;
    display: flex;
    flex-direction: column;
    box-shadow: 0 3px 0 -1px #fff, 0 3px 0 0 #a0a0a0;
  }
  .opts {
    height: 22px;
    box-sizing: border-box;
    padding-top: 1px;
    flex: none;
    display: flex;
    align-items: center;
    white-space: nowrap;
  }
  .radio {
    width: 10px;
    height: 10px;
    border-radius: 50%;
    border: 1px solid #999;
    background: radial-gradient(#fff, #ddd);
    flex: none;
  }
  .radio.first {
    margin-left: -2px;
  }
  .radio.on {
    background: radial-gradient(#0a78d0 35%, #d8e0e8 50%);
    border-color: #567;
  }
  .o1 {
    margin: 0 0 0 9px;
  }
  .o2 {
    margin: 0 0 0 8px;
  }
  .osep {
    width: 1px;
    height: 13px;
    background: #aaa;
    margin: 0 3px 0 10px;
    flex: none;
  }
  .chk {
    width: 11px;
    height: 11px;
    border: 1px solid #8a8aa0;
    background: #eef0ff;
    margin: 0 7px 0 0;
    display: block;
    flex: none;
  }
  .chk svg {
    display: block;
  }
  .chk.dis {
    border-color: #bbb;
    background: #f4f4f4;
  }
  .o3 {
    margin: 0 -2px 0 0;
  }
  .o4 {
    color: #a0a0a0;
  }
  .gridwrap {
    flex: 1;
    min-height: 0;
    border-right: 1px solid #aaa;
    border-top: 1px solid #aaa;
    overflow: hidden;
    width: 718px;
  }
  .qty {
    width: 717px;
    table-layout: fixed;
    border-collapse: separate;
    border-spacing: 0;
  }
  .qty th {
    height: 18px;
    background: #769fd0;
    color: #fff;
    font-weight: 400;
    padding: 0;
    border-right: 1px solid #b4bcc4;
    border-bottom: 1px solid #b4bcc4;
    white-space: nowrap;
    overflow: hidden;
    font-size: 12.500px;
  }
  .qty th:last-child {
    border-right: 0;
  }
  .qty th.mag {
    color: #b040b0;
  }
  .qty th.qname {
    padding-left: 74px;
  }
  .qty th.hsm {
    font-size: 11.500px;
  }
  .qty td {
    height: 18px;
    padding: 0;
    background: #fff;
    border-right: 1px solid #000080;
    border-bottom: 1px solid #000080;
    box-sizing: content-box;
    white-space: nowrap;
    overflow: hidden;
  }
  .qty td:last-child {
    border-right: 0;
  }
  .qty td.n {
    background: #769fd0;
    text-align: center;
    font-size: 11px;
    border-right: 1px solid #b4bcc4;
    border-bottom: 1px solid #b4bcc4;
  }
  .qty td.first {
    color: #5f0080;
  }
  .qty td.floor {
    background: #def0ff;
    text-align: center;
  }
  .name {
    text-align: center;
  }
  .qty td.num {
    text-align: right;
    font-family: "Liberation Sans", sans-serif;
    font-size: 11px;
    letter-spacing: 0.300px;
    padding-right: 2px;
  }
  .qty td.subt {
    background: #a8ccf0;
  }
  .sub-row td.num,
  .sub-row td:last-child {
    background: #fffee0;
  }
  .tot-row td:not(.n) {
    background: #7fffff;
  }
  .hscroll {
    height: 17px;
    flex: none;
    display: flex;
    align-items: center;
    background: #eeeeee;
    width: 717px;
    margin-bottom: 3px;
    position: relative;
  }
  .arr {
    width: 0;
    height: 0;
    border: 4px solid transparent;
    flex: none;
  }
  .arr.l {
    border-right-color: #444;
    border-left: 0;
    margin: 0 8px 0 7px;
  }
  .arr.r {
    border-left-color: #444;
    border-right: 0;
    margin-left: auto;
    margin-right: 8px;
  }
  .thumb {
    width: 403px;
    height: 15px;
    box-sizing: border-box;
    border: 1px solid #aaa;
    border-radius: 2px;
    background: linear-gradient(#ececec, #b8b8b8);
    display: flex;
    align-items: center;
    justify-content: center;
  }
  .grip {
    width: 7px;
    height: 6px;
    background: repeating-linear-gradient(90deg, #666 0 1px, transparent 1px 3px);
  }
  .actions {
    flex: 1;
    display: flex;
    align-items: flex-start;
    padding: 9px 0 0 6px;
    gap: 21px;
  }
  .btn {
    height: 23px;
    box-sizing: border-box;
    border: 1px solid #8a8a8a;
    border-radius: 3px;
    background: linear-gradient(#fafafa 45%, #dcdcdc);
    font: inherit;
    font-size: 12px;
    color: #222;
    padding: 0;
  }
  .btn:first-child {
    width: 127px;
  }
  .btn:nth-child(2) {
    margin-left: 1px;
    width: 80px;
  }
  .btn:nth-child(3) {
    margin-left: -2px;
    width: 103px;
  }
  .actions .primary {
    margin-left: auto;
    margin-right: 9px;
    width: 72px;
    border-color: #2f80c0;
    background: linear-gradient(#eaf6ff, #b4def8);
    color: #111;
    font-size: 12.500px;
  }
  .mark {
    position: absolute;
    box-sizing: border-box;
    border: 2px solid #f33;
  }
  .m1 {
    left: 214px;
    top: 302px;
    width: 78px;
    height: 21px;
  }
  .m2 {
    left: 476px;
    top: 298px;
    width: 91px;
    height: 27px;
  }
</style>
